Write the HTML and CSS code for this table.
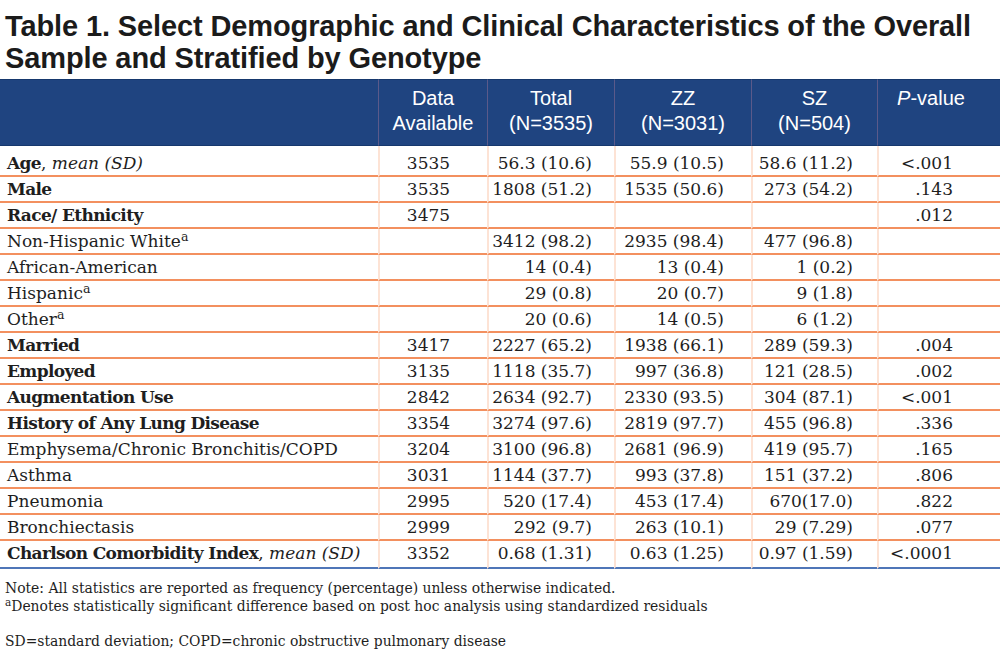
FILE: index.html
```html
<!DOCTYPE html>
<html lang="en">
<head>
<meta charset="utf-8">
<title>Table 1</title>
<link rel="stylesheet" href="styles.css">
</head>
<body>
<div class="page">
  <h1 class="title">Table 1. Select Demographic and Clinical Characteristics of the Overall Sample and Stratified by Genotype</h1>
  <table class="data">
    <colgroup>
      <col class="c-label">
      <col class="c-avail">
      <col class="c-total">
      <col class="c-zz">
      <col class="c-sz">
      <col class="c-p">
    </colgroup>
    <thead>
      <tr>
        <th class="h-label"></th>
        <th>Data<br>Available</th>
        <th>Total<br>(N=3535)</th>
        <th>ZZ<br>(N=3031)</th>
        <th>SZ<br>(N=504)</th>
        <th class="h-p"><i>P</i>-value</th>
      </tr>
    </thead>
    <tbody>
      <tr class="first"><td class="lbl"><b>Age</b>, <i>mean (SD)</i></td><td class="av">3535</td><td class="tot">56.3 (10.6)</td><td class="zz">55.9 (10.5)</td><td class="sz">58.6 (11.2)</td><td class="p">&lt;.001</td></tr>
      <tr><td class="lbl"><b>Male</b></td><td class="av">3535</td><td class="tot">1808 (51.2)</td><td class="zz">1535 (50.6)</td><td class="sz">273 (54.2)</td><td class="p">.143</td></tr>
      <tr><td class="lbl"><b>Race/ Ethnicity</b></td><td class="av">3475</td><td class="tot"></td><td class="zz"></td><td class="sz"></td><td class="p">.012</td></tr>
      <tr><td class="lbl">Non-Hispanic White<sup>a</sup></td><td class="av"></td><td class="tot">3412 (98.2)</td><td class="zz">2935 (98.4)</td><td class="sz">477 (96.8)</td><td class="p"></td></tr>
      <tr><td class="lbl">African-American</td><td class="av"></td><td class="tot">14 (0.4)</td><td class="zz">13 (0.4)</td><td class="sz">1 (0.2)</td><td class="p"></td></tr>
      <tr><td class="lbl">Hispanic<sup>a</sup></td><td class="av"></td><td class="tot">29 (0.8)</td><td class="zz">20 (0.7)</td><td class="sz">9 (1.8)</td><td class="p"></td></tr>
      <tr><td class="lbl">Other<sup>a</sup></td><td class="av"></td><td class="tot">20 (0.6)</td><td class="zz">14 (0.5)</td><td class="sz">6 (1.2)</td><td class="p"></td></tr>
      <tr><td class="lbl"><b>Married</b></td><td class="av">3417</td><td class="tot">2227 (65.2)</td><td class="zz">1938 (66.1)</td><td class="sz">289 (59.3)</td><td class="p">.004</td></tr>
      <tr><td class="lbl"><b>Employed</b></td><td class="av">3135</td><td class="tot">1118 (35.7)</td><td class="zz">997 (36.8)</td><td class="sz">121 (28.5)</td><td class="p">.002</td></tr>
      <tr><td class="lbl"><b>Augmentation Use</b></td><td class="av">2842</td><td class="tot">2634 (92.7)</td><td class="zz">2330 (93.5)</td><td class="sz">304 (87.1)</td><td class="p">&lt;.001</td></tr>
      <tr><td class="lbl"><b>History of Any Lung Disease</b></td><td class="av">3354</td><td class="tot">3274 (97.6)</td><td class="zz">2819 (97.7)</td><td class="sz">455 (96.8)</td><td class="p">.336</td></tr>
      <tr><td class="lbl">Emphysema/Chronic Bronchitis/COPD</td><td class="av">3204</td><td class="tot">3100 (96.8)</td><td class="zz">2681 (96.9)</td><td class="sz">419 (95.7)</td><td class="p">.165</td></tr>
      <tr><td class="lbl">Asthma</td><td class="av">3031</td><td class="tot">1144 (37.7)</td><td class="zz">993 (37.8)</td><td class="sz">151 (37.2)</td><td class="p">.806</td></tr>
      <tr><td class="lbl">Pneumonia</td><td class="av">2995</td><td class="tot">520 (17.4)</td><td class="zz">453 (17.4)</td><td class="sz">670(17.0)</td><td class="p">.822</td></tr>
      <tr><td class="lbl">Bronchiectasis</td><td class="av">2999</td><td class="tot">292 (9.7)</td><td class="zz">263 (10.1)</td><td class="sz">29 (7.29)</td><td class="p">.077</td></tr>
      <tr class="last"><td class="lbl"><b>Charlson Comorbidity Index</b>, <i>mean (SD)</i></td><td class="av">3352</td><td class="tot">0.68 (1.31)</td><td class="zz">0.63 (1.25)</td><td class="sz">0.97 (1.59)</td><td class="p">&lt;.0001</td></tr>
    </tbody>
  </table>
  <div class="notes">
    <p class="note">Note: All statistics are reported as frequency (percentage) unless otherwise indicated.</p>
    <p class="note"><sup>a</sup>Denotes statistically significant difference based on post hoc analysis using standardized residuals</p>
    <p class="note abbr">SD=standard deviation; COPD=chronic obstructive pulmonary disease</p>
  </div>
</div>
</body>
</html>
```

FILE: styles.css
```css
html, body {
  margin: 0;
  padding: 0;
  background: #ffffff;
}

.page {
  width: 1000px;
  height: 665px;
  overflow: hidden;
}

.title {
  margin: 0;
  padding: 10px 0 0 5px;
  height: 70px;
  box-sizing: border-box;
  font-family: "Liberation Sans", Arial, sans-serif;
  font-weight: bold;
  font-size: 29px;
  line-height: 32px;
  color: #1b1b1b;
  letter-spacing: -0.12px;
}

.data {
  width: 1000px;
  border-collapse: separate;
  border-spacing: 0;
  table-layout: fixed;
  margin-top: 9px;
}

.c-label { width: 378px; }
.c-avail { width: 109px; }
.c-total { width: 127px; }
.c-zz { width: 137px; }
.c-sz { width: 126px; }
.c-p { width: 123px; }

.data th {
  background: #1f4480;
  color: #ffffff;
  font-family: "Liberation Sans", Arial, sans-serif;
  font-weight: normal;
  font-size: 20px;
  line-height: 25px;
  height: 67px;
  box-sizing: border-box;
  padding: 6px 0 0 0;
  vertical-align: top;
  text-align: center;
  border-top: 1px solid #16386d;
  border-bottom: 1px solid #16386d;
  border-left: 1px solid #5b5a8a;
}

.data th.h-label {
  border-left: none;
}

.data th.h-p {
  padding-right: 16px;
}

.data td {
  font-family: "DejaVu Serif", "Liberation Serif", serif;
  font-size: 17px;
  line-height: 23px;
  height: 26px;
  box-sizing: border-box;
  padding: 1px 0 0 0;
  color: #1e1e1e;
  border-bottom: 2px solid #f3905f;
  border-left: 2px solid #fde3d5;
  white-space: nowrap;
  vertical-align: top;
}

.data td b {
  letter-spacing: -0.65px;
}

.data td.lbl {
  padding-left: 7px;
  border-left: none;
}

.data tr.first td {
  height: 31px;
  padding-top: 6px;
}

.data tr.last td {
  height: 28px;
  border-bottom: 2px solid #4f76b8;
}

.data td.av {
  text-align: center;
  padding-right: 10px;
}

.data td.tot {
  text-align: right;
  padding-right: 22px;
}

.data td.zz {
  text-align: right;
  padding-right: 27px;
}

.data td.sz {
  text-align: right;
  padding-right: 24px;
}

.data td.p {
  text-align: right;
  padding-right: 47px;
}

.data sup {
  font-size: 12.5px;
  line-height: 0;
  vertical-align: 6px;
}

.notes {
  padding: 10px 0 0 5px;
}

.note {
  margin: 0;
  font-family: "DejaVu Serif", "Liberation Serif", serif;
  font-size: 13.9px;
  line-height: 18px;
  color: #1e1e1e;
  white-space: nowrap;
}

.note sup {
  font-size: 10.5px;
  line-height: 0;
  vertical-align: 5px;
}

.note.abbr {
  margin-top: 17px;
}
```
